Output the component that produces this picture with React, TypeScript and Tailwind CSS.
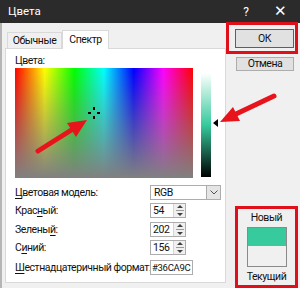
import React from 'react';

const font = { fontFamily: 'Roboto, "Noto Sans", sans-serif' };

function Spin({ value }: { value: string }) {
  return (
    <div className="flex h-[15px] w-[36px] border border-[#adadad] bg-white">
      <div className="flex-1 pl-[2px] leading-[13px]">{value}</div>
      <div className="flex w-[12px] flex-col items-center justify-center gap-[2px] border-l border-[#d4d4d4] bg-[#f0f0f0]">
        <div className="h-0 w-0 border-x-[3px] border-b-[3px] border-x-transparent border-b-[#404040]" />
        <div className="h-[1px] w-[8px] bg-[#9a9a9a]" />
        <div className="h-0 w-0 border-x-[3px] border-t-[3px] border-x-transparent border-t-[#404040]" />
      </div>
    </div>
  );
}

function Label({ pre, u, post }: { pre: string; u: string; post: string }) {
  return (
    <span>
      {pre}
      <span className="underline underline-offset-2">{u}</span>
      {post}
    </span>
  );
}

export default function App() {
  return (
    <div className="relative flex h-[288px] w-[300px] flex-col overflow-hidden bg-[#f0f0f0] text-[10.5px] tracking-[-0.45px] text-[#111]" style={font}>
      {/* title bar */}
      <div className="flex h-[23px] items-center bg-[#2b2b2b] pl-[8px] text-[11.5px] tracking-normal text-white">
        <span className="flex-1">Цвета</span>
        <span className="w-[36px] text-center text-[12px]">?</span>
        <span className="w-[36px] pr-[4px] text-center text-[15px] leading-none">✕</span>
      </div>

      <div className="flex flex-1 border-l-2 border-[#b5b5b5]">
        {/* left: tabs + panel */}
        <div className="flex w-[224px] flex-col pl-[3px] pt-[7px]">
          <div className="flex h-[18px] items-end pl-[2px]">
            <div className="flex h-[16px] w-[55px] items-center justify-center border border-b-0 border-[#d9d9d9] bg-[#f0f0f0]">Обычные</div>
            <div className="relative z-10 -mb-[1px] flex h-[19px] w-[47px] items-center justify-center border border-b-0 border-[#d9d9d9] bg-white">Спектр</div>
          </div>
          <div className="flex h-[235px] flex-col border border-[#d9d9d9] bg-white pl-[9px] pt-[5px]">
            <div className="h-[14px] leading-[14px]">Цвета:</div>
            <div className="flex">
              <div className="relative h-[110px] w-[178px] bg-[linear-gradient(to_bottom,rgba(128,128,128,0),#808080),linear-gradient(to_right,#f00,#ff0,#0f0,#0ff,#00f,#f0f,#f00)]">
                <div className="absolute left-[73px] top-[44px] h-[2px] w-[3px] bg-black" />
                <div className="absolute left-[82px] top-[44px] h-[2px] w-[3px] bg-black" />
                <div className="absolute left-[78px] top-[39px] h-[3px] w-[2px] bg-black" />
                <div className="absolute left-[78px] top-[48px] h-[3px] w-[2px] bg-black" />
              </div>
              <div className="ml-[8px] mt-[5px] h-[104px] w-[10px] bg-[linear-gradient(to_bottom,#ffffff,#36ca9c_50%,#000000)]" />
              <div className="ml-[2px] mt-[51px] h-0 w-0 border-y-[4px] border-r-[5px] border-y-transparent border-r-black" />
            </div>

            <div className="mt-[7px] flex h-[15px] items-center">
              <div className="w-[135px]"><Label pre="" u="Ц" post="ветовая модель:" /></div>
              <div className="flex h-[15px] w-[71px] border border-[#adadad] bg-white">
                <div className="flex-1 pl-[3px] leading-[13px]">RGB</div>
                <div className="flex w-[14px] items-center justify-center border-l border-[#adadad] bg-[#e5e5e5]">
                  <svg width="8" height="5" viewBox="0 0 8 5"><path d="M0.5 0.5 L4 4 L7.5 0.5" fill="none" stroke="#555" strokeWidth="1" /></svg>
                </div>
              </div>
            </div>
            <div className="mt-[3px] flex h-[15px] items-center">
              <div className="w-[135px]"><Label pre="Крас" u="н" post="ый:" /></div>
              <Spin value="54" />
            </div>
            <div className="mt-[4px] flex h-[15px] items-center">
              <div className="w-[135px]"><Label pre="Зелены" u="й" post=":" /></div>
              <Spin value="202" />
            </div>
            <div className="mt-[3px] flex h-[15px] items-center">
              <div className="w-[135px]"><Label pre="С" u="и" post="ний:" /></div>
              <Spin value="156" />
            </div>
            <div className="mt-[5px] flex h-[15px] items-center">
              <div className="w-[135px] whitespace-nowrap"><Label pre="" u="Ш" post="естнадцатеричный формат:" /></div>
              <div className="h-[15px] w-[43px] whitespace-nowrap border border-[#adadad] bg-white pl-[1px] text-[9.5px] tracking-[-0.3px] leading-[13px]">#36CA9C</div>
            </div>
          </div>
        </div>

        {/* right: buttons + preview */}
        <div className="flex flex-1 flex-col">
          <div className="-mt-[1px] flex h-[32px] w-[72px] border-[3px] border-[#e0101a] pb-[1px] pl-[6px] pr-[1px] pt-[4px]">
            <div className="flex h-[19px] flex-1 items-center justify-center border border-[#0078d7] bg-[#e1e1e1]">ОК</div>
          </div>
          <div className="ml-[10px] mt-[3px] flex h-[14px] w-[58px] items-center justify-center border border-[#adadad] bg-[#e1e1e1]">Отмена</div>
          <div className="flex-1" />
          <div className="ml-[9px] flex h-[82px] w-[63px] flex-col items-center border-[3px] border-[#e0101a] pt-[1px]">
            <div className="h-[16px] leading-[16px]">Новый</div>
            <div className="mt-[1px] flex h-[42px] w-[40px] flex-col border border-[#8a8a8a]">
              <div className="h-[18px] bg-[#36ca9c]" />
              <div className="flex-1 bg-[#f0f0f0]" />
            </div>
            <div className="mt-[2px] h-[16px] leading-[16px]">Текущий</div>
          </div>
        </div>
      </div>

      {/* annotation arrows */}
      <svg className="pointer-events-none absolute inset-0" width="300" height="288" viewBox="0 0 300 288">
        <line x1="38" y1="151" x2="73" y2="129" stroke="#e8141c" strokeWidth="5" strokeLinecap="round" />
        <polygon points="87,120 76,137 67,123" fill="#e8141c" />
        <line x1="274" y1="96" x2="236" y2="114" stroke="#e8141c" strokeWidth="5" strokeLinecap="round" />
        <polygon points="220,122 240,121 233,107" fill="#e8141c" />
      </svg>
    </div>
  );
}
